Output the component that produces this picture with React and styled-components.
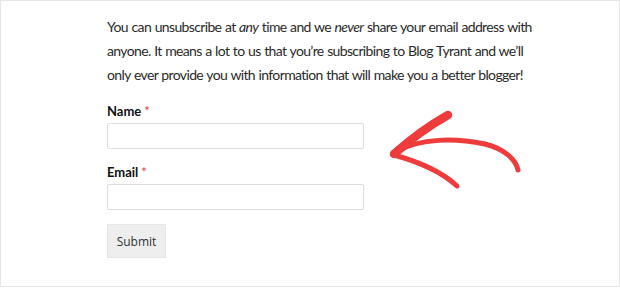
import React from "react";
import styled, { createGlobalStyle } from "styled-components";

const Global = createGlobalStyle`
  html, body {
    margin: 0;
    padding: 0;
    background: #fff;
  }
`;

const Canvas = styled.div`
  position: relative;
`;

const Frame = styled.div`
  box-sizing: border-box;
  width: 620px;
  height: 287px;
  border: 1px solid #e6e6e6;
  padding: 14px 0 0 106px;
  font-family: "Lato", "Open Sans", sans-serif;
  color: #222;
  display: flex;
`;

const Column = styled.div`
  width: 470px;
  display: flex;
  flex-direction: column;
  align-items: flex-start;
`;

const Intro = styled.p`
  margin: 0 0 16px;
  font-size: 14px;
  letter-spacing: -0.64px;
  word-spacing: 0.6px;
  line-height: 24px;
  color: #2a2a2a;
  white-space: nowrap;
  em {
    font-style: italic;
  }
`;

const Field = styled.div`
  display: flex;
  flex-direction: column;
  margin-bottom: 15px;
`;

const Label = styled.label`
  font-size: 13px;
  line-height: 16px;
  font-weight: 700;
  color: #111;
  margin-bottom: 4px;
  span {
    color: #e03a3a;
    margin-left: 3px;
    font-weight: 400;
  }
`;

const Input = styled.input`
  box-sizing: border-box;
  width: 257px;
  height: 26px;
  border: 1px solid #dcdcdc;
  border-radius: 2px;
  background: #fff;
`;

const Button = styled.button`
  width: 59px;
  height: 34px;
  margin-top: -1px;
  border: 1px solid #e6e6e6;
  background: #eeeeee;
  color: #333;
  font-family: "Open Sans", sans-serif;
  font-size: 12px;
  padding: 0;
`;

const Arrow = styled.svg`
  position: absolute;
  left: 0;
  top: 0;
  pointer-events: none;
`;

export default function App() {
  return (
    <Canvas>
      <Global />
      <Frame>
        <Column>
          <Intro>
            You can unsubscribe at <em>any</em> time and we <em>never</em> share
            your email address with
            <br />
            anyone. It means a lot to us that you’re subscribing to Blog Tyrant
            and we’ll
            <br />
            only ever provide you with information that will make you a better
            blogger!
          </Intro>
          <Field>
            <Label>
              Name<span>*</span>
            </Label>
            <Input />
          </Field>
          <Field>
            <Label>
              Email<span>*</span>
            </Label>
            <Input />
          </Field>
          <Button>Submit</Button>
        </Column>
      </Frame>
      <Arrow width="620" height="287" viewBox="0 0 620 287">
        <g fill="none" stroke="#ee3b3b" strokeLinecap="round" strokeLinejoin="round">
          <path d="M448 115 C432 124 412 138 394 154" strokeWidth="8.5" />
          <path d="M394 155 C412 160 440 170 457 186" strokeWidth="5" />
          <path d="M398 151 C420 138 455 138 485 144 C505 149 516 160 518 170" strokeWidth="5" />
        </g>
      </Arrow>
    </Canvas>
  );
}
